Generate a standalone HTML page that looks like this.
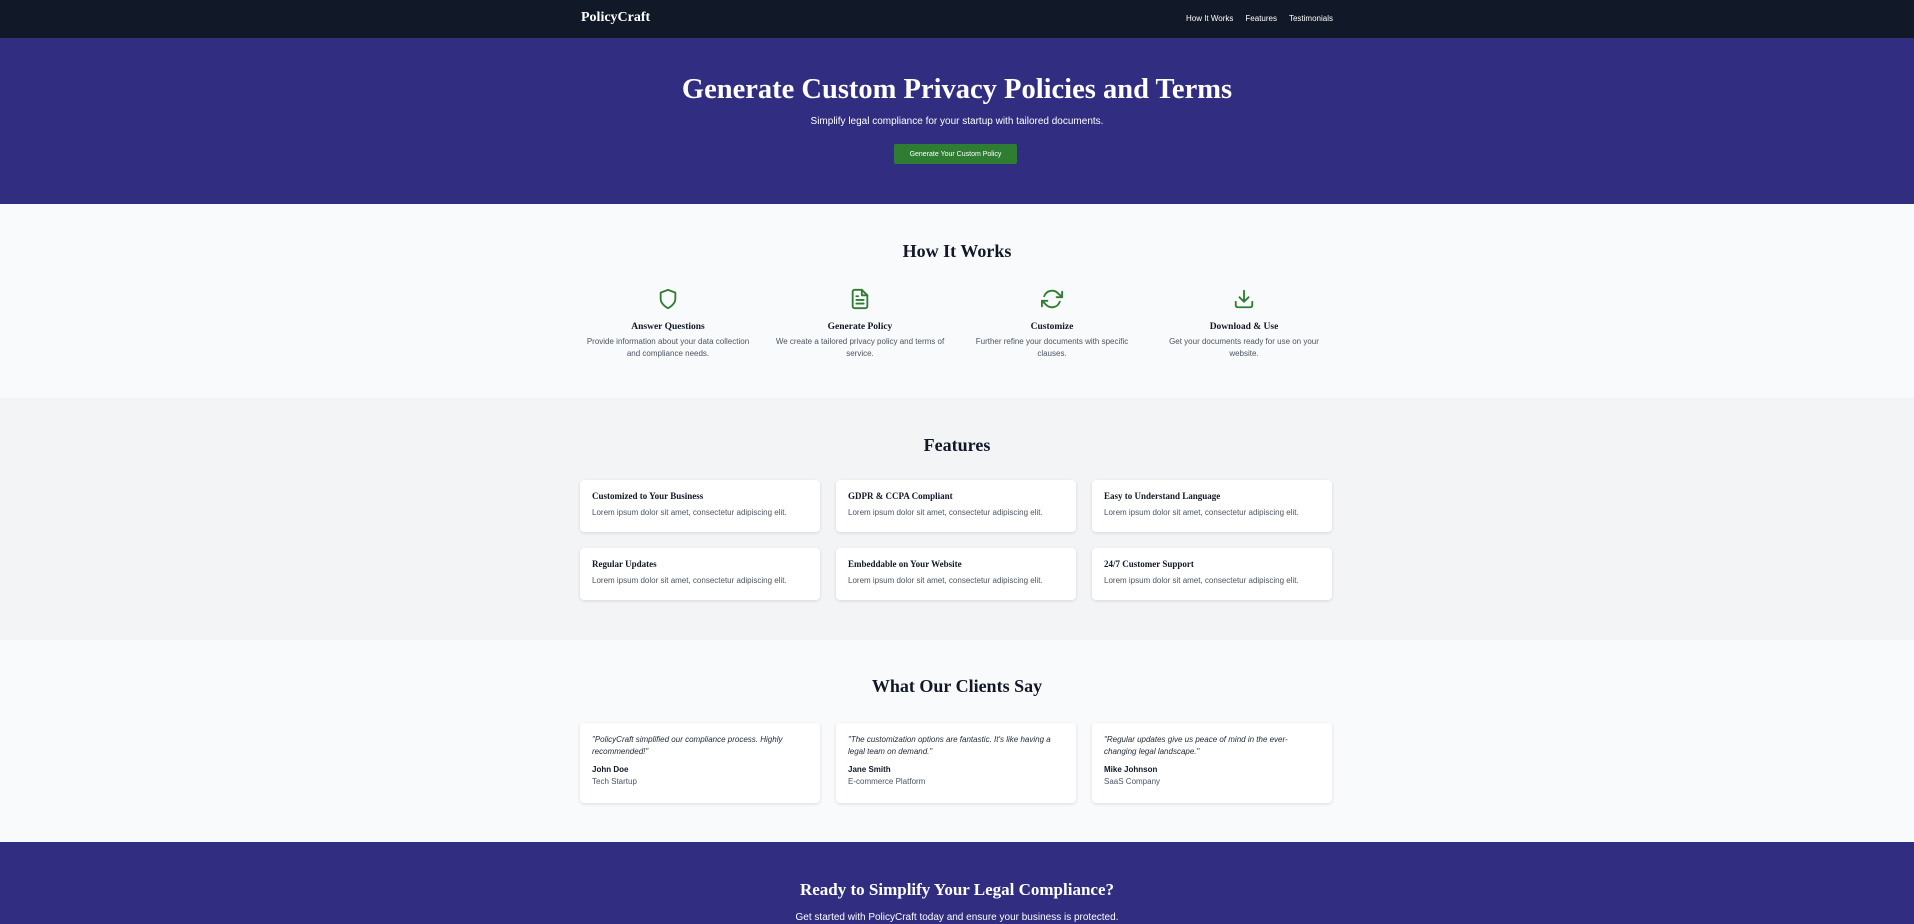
<!DOCTYPE html>
<html><head><meta charset="utf-8"><style>
*{margin:0;padding:0;box-sizing:border-box}
body{width:1914px;height:924px;overflow:hidden;font-family:"Liberation Sans",sans-serif;background:#f9fafb;color:#111827}
.serif{font-family:"Liberation Serif",serif;font-weight:bold}
.wrap{width:752px;margin:0 auto;position:relative}
nav{background:#111827;height:38px}
nav .wrap{height:35px;display:flex;align-items:center;justify-content:space-between}
nav .logo{color:#fff;font-size:14px}
nav .links a{color:#fff;font-size:8px;text-decoration:none;margin-left:12px;position:relative;top:-1px}
.hero{background:#312e81;height:166px;text-align:center;color:#fff;position:relative}
.hero h1{position:absolute;left:0;right:0;top:36px;font-size:28.5px}
.hero p{position:absolute;left:0;right:0;top:78px;font-size:10px}
.hero .btn{position:absolute;left:894px;top:106px;width:123px;height:20px;background:#2e7d32;border-radius:2px;font-size:7px;line-height:21px;color:#fff}
.how{height:194px;position:relative;text-align:center}
h2{font-size:18px;position:absolute;left:0;right:0;text-align:center}
.how h2{top:37px}
.steps{position:absolute;left:572px;top:84px;width:768px;display:flex}
.step{width:192px;text-align:center}
.step svg{width:22px;height:22px;display:block;margin:0 auto}
.step h3{font-size:9.5px;margin-top:12px}
.step p{font-size:8px;color:#4b5563;line-height:12px;margin-top:4px;padding:0 8px}
.feat{background:#f3f4f6;height:242px;position:relative}
.feat h2{top:37px}
.grid{position:absolute;left:580px;top:82px;width:752px;display:grid;grid-template-columns:240px 240px 240px;column-gap:16px;row-gap:16px}
.card{background:#fff;border-radius:4px;box-shadow:0 1px 3px rgba(0,0,0,.12);height:52px;padding:11px 12px}
.card h4{font-size:9px}
.card p{font-size:8px;color:#4b5563;margin-top:7px}
.test{height:202px;position:relative}
.test h2{top:36px}
.tgrid{position:absolute;left:580px;top:83px;width:752px;display:grid;grid-template-columns:240px 240px 240px;column-gap:16px}
.tcard{background:#fff;border-radius:4px;box-shadow:0 1px 3px rgba(0,0,0,.12);height:80px;padding:11px 12px;font-size:8px}
.tcard i{display:block;line-height:12px;color:#1f2937}
.tcard b{display:block;margin-top:7px;font-size:8px}
.tcard span{display:block;color:#4b5563;margin-top:3px}
.cta{background:#312e81;height:82px;position:relative;color:#fff;text-align:center}
.cta h2{top:38px;font-size:17px}
.cta p{position:absolute;left:0;right:0;top:70px;font-size:10px}
</style></head><body>
<nav><div class="wrap"><span class="logo serif">PolicyCraft</span><span class="links"><a>How It Works</a><a>Features</a><a>Testimonials</a></span></div></nav>
<section class="hero"><h1 class="serif">Generate Custom Privacy Policies and Terms</h1><p>Simplify legal compliance for your startup with tailored documents.</p><div class="btn">Generate Your Custom Policy</div></section>
<section class="how"><h2 class="serif">How It Works</h2>
<div class="steps">
<div class="step"><svg viewBox="0 0 24 24" fill="none" stroke="#2e7d32" stroke-width="2" stroke-linecap="round" stroke-linejoin="round"><path d="M12 22s8-4 8-10V5l-8-3-8 3v7c0 6 8 10 8 10z"/></svg><h3 class="serif">Answer Questions</h3><p>Provide information about your data collection and compliance needs.</p></div>
<div class="step"><svg viewBox="0 0 24 24" fill="none" stroke="#2e7d32" stroke-width="2" stroke-linecap="round" stroke-linejoin="round"><path d="M14 2H6a2 2 0 0 0-2 2v16a2 2 0 0 0 2 2h12a2 2 0 0 0 2-2V8z"/><path d="M14 2v6h6M16 13H8M16 17H8M10 9H8"/></svg><h3 class="serif">Generate Policy</h3><p>We create a tailored privacy policy and terms of service.</p></div>
<div class="step"><svg viewBox="0 0 24 24" fill="none" stroke="#2e7d32" stroke-width="2" stroke-linecap="round" stroke-linejoin="round"><path d="M23 4v6h-6M1 20v-6h6"/><path d="M3.51 9a9 9 0 0 1 14.85-3.36L23 10M1 14l4.64 4.36A9 9 0 0 0 20.49 15"/></svg><h3 class="serif">Customize</h3><p>Further refine your documents with specific clauses.</p></div>
<div class="step"><svg viewBox="0 0 24 24" fill="none" stroke="#2e7d32" stroke-width="2" stroke-linecap="round" stroke-linejoin="round"><path d="M21 15v4a2 2 0 0 1-2 2H5a2 2 0 0 1-2-2v-4M7 10l5 5 5-5M12 15V3"/></svg><h3 class="serif">Download &amp; Use</h3><p>Get your documents ready for use on your website.</p></div>
</div></section>
<section class="feat"><h2 class="serif">Features</h2>
<div class="grid">
<div class="card"><h4 class="serif">Customized to Your Business</h4><p>Lorem ipsum dolor sit amet, consectetur adipiscing elit.</p></div>
<div class="card"><h4 class="serif">GDPR &amp; CCPA Compliant</h4><p>Lorem ipsum dolor sit amet, consectetur adipiscing elit.</p></div>
<div class="card"><h4 class="serif">Easy to Understand Language</h4><p>Lorem ipsum dolor sit amet, consectetur adipiscing elit.</p></div>
<div class="card"><h4 class="serif">Regular Updates</h4><p>Lorem ipsum dolor sit amet, consectetur adipiscing elit.</p></div>
<div class="card"><h4 class="serif">Embeddable on Your Website</h4><p>Lorem ipsum dolor sit amet, consectetur adipiscing elit.</p></div>
<div class="card"><h4 class="serif">24/7 Customer Support</h4><p>Lorem ipsum dolor sit amet, consectetur adipiscing elit.</p></div>
</div></section>
<section class="test"><h2 class="serif">What Our Clients Say</h2>
<div class="tgrid">
<div class="tcard"><i>"PolicyCraft simplified our compliance process. Highly recommended!"</i><b>John Doe</b><span>Tech Startup</span></div>
<div class="tcard"><i>"The customization options are fantastic. It's like having a legal team on demand."</i><b>Jane Smith</b><span>E-commerce Platform</span></div>
<div class="tcard"><i>"Regular updates give us peace of mind in the ever-changing legal landscape."</i><b>Mike Johnson</b><span>SaaS Company</span></div>
</div></section>
<section class="cta"><h2 class="serif">Ready to Simplify Your Legal Compliance?</h2><p>Get started with PolicyCraft today and ensure your business is protected.</p></section>
</body></html>
